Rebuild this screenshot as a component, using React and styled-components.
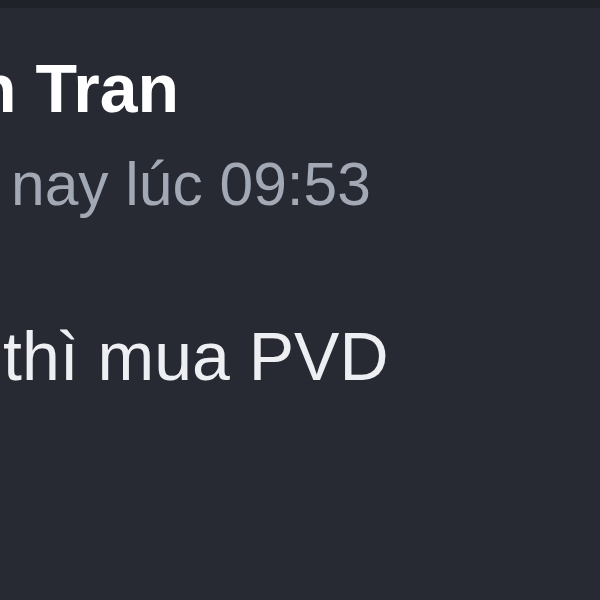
import React from "react";
import styled, { createGlobalStyle } from "styled-components";

const GlobalStyle = createGlobalStyle`
  html, body {
    margin: 0;
    padding: 0;
    background: #282a33;
  }
  #root {
    width: 600px;
    height: 600px;
    overflow: hidden;
  }
`;

const Screen = styled.div`
  display: flex;
  flex-direction: column;
  width: 600px;
  height: 600px;
  background: #282a33;
  font-family: "Liberation Sans", Arial, sans-serif;
  overflow: hidden;
`;

const TopBar = styled.div`
  height: 8px;
  flex-shrink: 0;
  background: #1f2229;
`;

const Message = styled.div`
  display: flex;
  flex-direction: column;
  padding-top: 40px;
`;

const Author = styled.div`
  margin-left: -25px;
  font-size: 68px;
  line-height: 80px;
  font-weight: 700;
  color: #ffffff;
  white-space: nowrap;
`;

const Timestamp = styled.div`
  margin-top: 21px;
  margin-left: 11px;
  font-size: 60.5px;
  line-height: 70px;
  color: #a3a8b5;
  white-space: nowrap;
`;

const Body = styled.div`
  margin-top: 97px;
  margin-left: 3px;
  font-size: 68px;
  line-height: 80px;
  color: #eeeff2;
  white-space: nowrap;
`;

function App() {
  return (
    <>
      <GlobalStyle />
      <Screen>
        <TopBar />
        <Message>
          <Author>n Tran</Author>
          <Timestamp>nay lúc 09:53</Timestamp>
          <Body>thì mua PVD</Body>
        </Message>
      </Screen>
    </>
  );
}

export default App;
